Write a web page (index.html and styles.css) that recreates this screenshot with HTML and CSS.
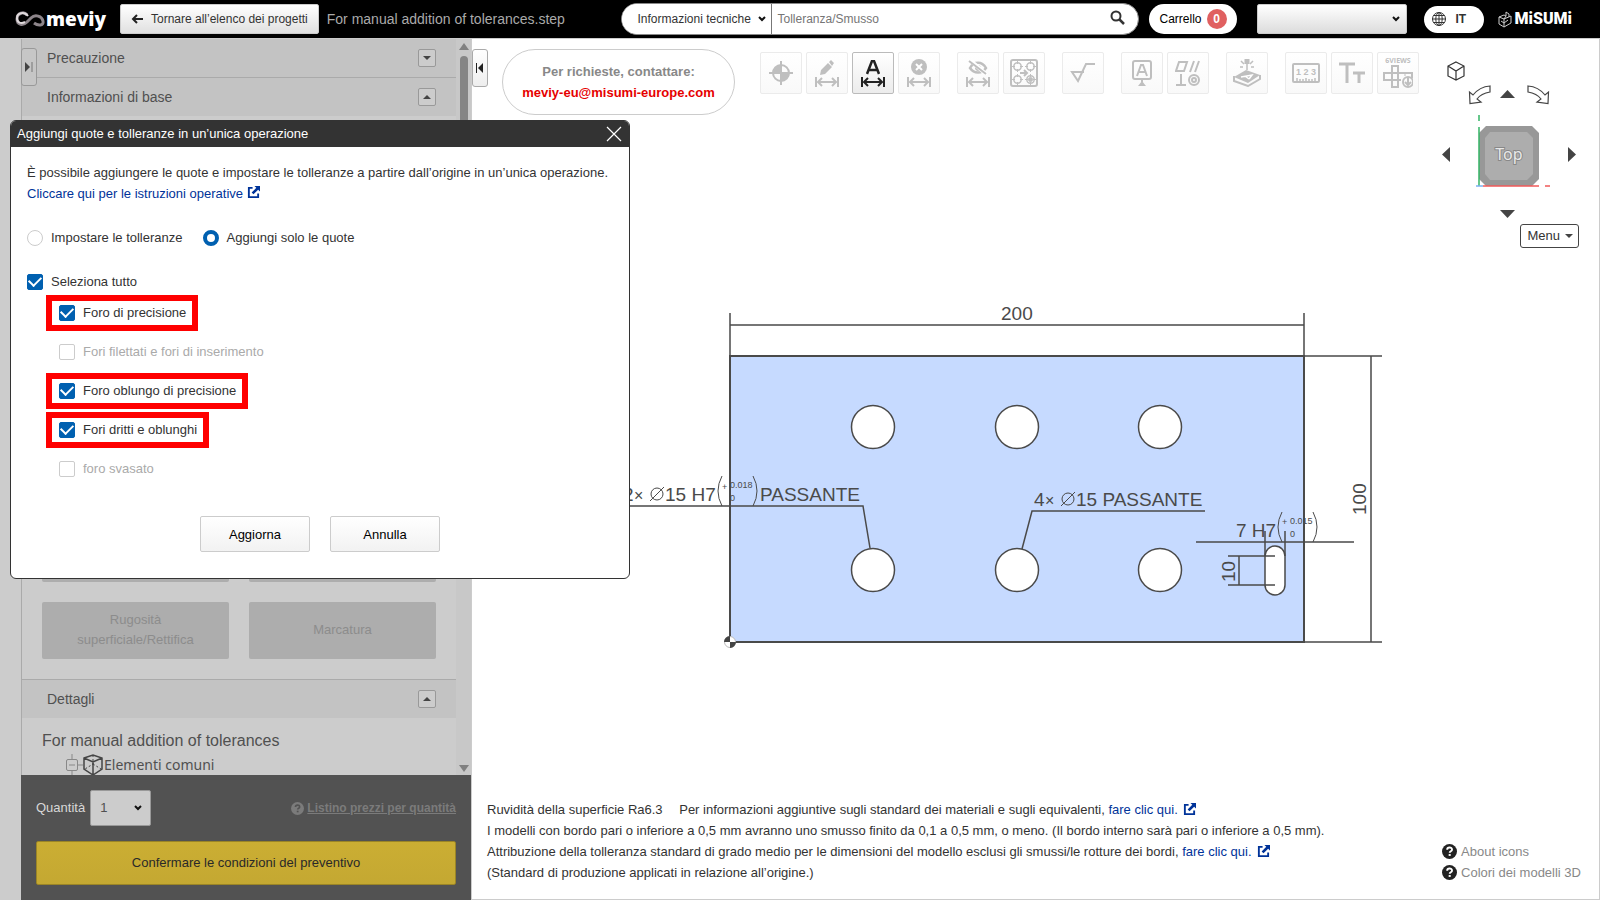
FILE: index.html
```html
<!DOCTYPE html>
<html lang="it">
<head>
    <meta charset="UTF-8">
    <meta name="viewport" content="width=device-width, initial-scale=1.0">
    <title>meviy - For manual addition of tolerances.step</title>
    <link rel="stylesheet" href="styles.css">
</head>
<body>

    <!-- Shared icons -->
    <svg class="defs" aria-hidden="true">
        <symbol id="i-width" viewBox="0 0 24 10">
            <path d="M1 0v10M23 0v10M3 5h18M7 1L3 5l4 4M17 1l4 4-4 4" fill="none" stroke="currentColor" stroke-width="2"/>
        </symbol>
        <symbol id="i-external" viewBox="0 0 14 14">
            <path d="M6 2H2v10h10V8" fill="none" stroke="currentColor" stroke-width="2"/>
            <path d="M8 0h6v6l-2-2-5 5-2-2 5-5z" fill="currentColor"/>
        </symbol>
        <symbol id="i-help" viewBox="0 0 16 16">
            <circle cx="8" cy="8" r="8" fill="currentColor"/>
            <path d="M5.500 6.200c0-3.200 5.200-3.200 5.200-.2 0 1.700-2.500 1.600-2.500 3.300" fill="none" stroke="var(--mark)" stroke-width="2"/>
            <path d="M7.100 10.700h2.200v2H7.100z" fill="var(--mark)"/>
        </symbol>
        <symbol id="i-turn" viewBox="0 0 24 20">
            <path d="M22 1v6C16 8 12 10 9 14l4 3-11 1.500L1.500 7l3.500 3C9 5 15 1.500 22 1z" fill="none" stroke="#444" stroke-width="1.200"/>
        </symbol>
    </svg>

    <header class="topbar">
        <a class="brand" href="#">
            <svg width="30" height="18" viewBox="0 0 30 18" fill="none">
                <path d="M12 5C9 1 2 3 2 9s6 7 10 3l4-4c4-4 11-2 12 3s-5 5-9 2" stroke="#8d858a" stroke-width="3"/>
                <path d="M13 6C9 1 2 3 2 8s4 6 8 4" stroke="#e0dadd" stroke-width="2"/>
            </svg>
            <span>meviy</span>
        </a>
        <button class="back-btn" type="button">
            <svg width="12" height="10" viewBox="0 0 12 10"><path d="M12 5H2M6 1L2 5l4 4" fill="none" stroke="#222" stroke-width="2"/></svg>
            Tornare all’elenco dei progetti
        </button>
        <span class="file-name">For manual addition of tolerances.step</span>
        <form class="search">
            <select class="search-type" aria-label="Categoria"><option>Informazioni tecniche</option></select>
            <input class="search-input" type="text" placeholder="Tolleranza/Smusso" aria-label="Cerca">
            <button class="search-btn" type="button" aria-label="Cerca">
                <svg width="15" height="15" viewBox="0 0 15 15"><circle cx="6" cy="6" r="4.500" fill="none" stroke="#333" stroke-width="2"/><path d="M9 9l5 5" stroke="#333" stroke-width="2.500"/></svg>
            </button>
        </form>
        <button class="cart" type="button">Carrello <span class="badge">0</span></button>
        <select class="account" aria-label="Account"><option></option></select>
        <button class="lang" type="button">
            <svg width="14" height="14" viewBox="0 0 14 14" fill="none" stroke="#333"><circle cx="7" cy="7" r="6.500"/><ellipse cx="7" cy="7" rx="3.200" ry="6.500"/><path d="M7 0v14M0 7h14M1.500 3.500h11M1.500 10.500h11"/></svg>
            IT
        </button>
        <a class="misumi" href="#">
            <svg width="14" height="17" viewBox="0 0 14 17" fill="none" stroke="#ccc"><path d="M1 6l5 2v8l-5-3zM6 8l7-3v7l-7 4M1 6l5-2 2 1V1l3 2v3M6 8l2-3M3 10l3 2 4-3"/></svg>
            <span>MiSUMi</span>
        </a>
    </header>

    <div class="workspace">

        <aside class="sidebar">
            <button class="tab tab-left" type="button" aria-label="Apri pannello">
                <svg width="8" height="10" viewBox="0 0 8 10"><path d="M0 0l5 5-5 5z" fill="#444"/><path d="M7 0v10" stroke="#777"/></svg>
            </button>
            <div class="panel">
                <div class="panel-content">
                    <div class="section-head">
                        Precauzione
                        <button class="toggle" type="button" aria-label="Espandi"><span class="tri-down"></span></button>
                    </div>
                    <div class="section-head">
                        Informazioni di base
                        <button class="toggle" type="button" aria-label="Comprimi"><span class="tri-up"></span></button>
                    </div>
                    <div class="section-body">
                        <div class="feature-grid">
                            <div class="feature"></div>
                            <div class="feature"></div>
                            <button class="feature" type="button" disabled>Rugosità<br>superficiale/Rettifica</button>
                            <button class="feature" type="button" disabled>Marcatura</button>
                        </div>
                    </div>
                    <div class="section-head">
                        Dettagli
                        <button class="toggle" type="button" aria-label="Comprimi"><span class="tri-up"></span></button>
                    </div>
                    <div class="tree">
                        <div class="tree-title">For manual addition of tolerances</div>
                        <div class="tree-item">
                            <svg width="38" height="22" viewBox="0 0 38 22" fill="none">
                                <path d="M6 0v5M6 17v5M12 11h5" stroke="#888"/>
                                <rect x=".5" y="5.500" width="11" height="11" rx="1.500" stroke="#888"/>
                                <path d="M3 11h6" stroke="#888"/>
                                <path d="M18 4l9-3 9 3v11l-9 6-9-6zM18 4l9 4 9-4M27 8v12" stroke="#444" stroke-width="1.500"/>
                                <path d="M27 1v9l-8 5M27 10l8 5" stroke="#444" stroke-dasharray="2 2"/>
                            </svg>
                            <span>Elementi comuni</span>
                        </div>
                    </div>
                </div>
                <div class="scrollbar">
                    <span class="scroll-up"></span>
                    <span class="scroll-thumb"></span>
                    <span class="scroll-down"></span>
                </div>
            </div>
            <div class="order">
                <div class="order-row">
                    <label for="qty">Quantità</label>
                    <select id="qty" class="qty"><option>1</option></select>
                    <a class="price-list" href="#">
                        <svg width="13" height="13"><use href="#i-help"/></svg>
                        <span>Listino prezzi per quantità</span>
                    </a>
                </div>
                <button class="confirm-btn" type="button">Confermare le condizioni del preventivo</button>
            </div>
        </aside>

        <main class="viewer">
            <button class="tab tab-right" type="button" aria-label="Chiudi pannello">
                <svg width="8" height="10" viewBox="0 0 8 10"><path d="M7 0v10L2 5z" fill="#222"/><path d="M.5 0v10" stroke="#222"/></svg>
            </button>

            <div class="viewer-top">
                <div class="contact">
                    <span>Per richieste, contattare:</span>
                    <a href="mailto:meviy-eu@misumi-europe.com">meviy-eu@misumi-europe.com</a>
                </div>

                <div class="toolbar">
                    <div class="tool-group">
                        <button class="tool" type="button" aria-label="Origine">
                            <svg width="24" height="24" viewBox="0 0 24 24"><circle cx="12" cy="12" r="8" fill="none" stroke="currentColor" stroke-width="2"/><path d="M12 12V4a8 8 0 0 0-8 8zM12 12v8a8 8 0 0 0 8-8z" fill="currentColor"/><path d="M12 0v24M0 12h24" stroke="currentColor" stroke-width="2"/></svg>
                        </button>
                        <button class="tool" type="button" aria-label="Modifica quota">
                            <svg width="14" height="15" viewBox="0 0 14 15"><path d="M0 15l1-5 7-7 4 4-7 7zM9 2l2-2 3 3-2 3z" fill="currentColor"/></svg>
                            <svg width="24" height="10"><use href="#i-width"/></svg>
                        </button>
                        <button class="tool active" type="button" aria-label="Quote automatiche">
                            <svg width="14" height="15" viewBox="0 0 14 15"><path d="M1 14L6 1h2l5 13M3 10h8" fill="none" stroke="currentColor" stroke-width="2.500"/></svg>
                            <svg width="24" height="10"><use href="#i-width"/></svg>
                        </button>
                        <button class="tool" type="button" aria-label="Elimina quote">
                            <svg width="16" height="16" viewBox="0 0 16 16"><circle cx="8" cy="8" r="8" fill="currentColor"/><path d="M5 5l6 6M11 5l-6 6" stroke="#fff" stroke-width="2"/></svg>
                            <svg width="24" height="10"><use href="#i-width"/></svg>
                        </button>
                    </div>
                    <div class="tool-group">
                        <button class="tool" type="button" aria-label="Nascondi quote">
                            <svg width="20" height="15" viewBox="0 0 20 15" fill="none" stroke="currentColor"><path d="M2 8c4-7 12-7 16 0-4 6-12 6-16 0z" stroke-width="2.500"/><circle cx="10" cy="8" r="2.500" fill="currentColor"/><path d="M2 0l17 15" stroke="#fff" stroke-width="4"/><path d="M1 1l17 13" stroke-width="2"/></svg>
                            <svg width="24" height="10"><use href="#i-width"/></svg>
                        </button>
                        <button class="tool" type="button" aria-label="Raggruppa fori">
                            <svg width="28" height="28" viewBox="0 0 28 28" fill="none" stroke="currentColor"><rect x="1" y="1" width="26" height="26" rx="2" stroke-width="2"/><g stroke-width="1.500"><circle cx="7.500" cy="7.500" r="3.700"/><circle cx="20.500" cy="7.500" r="3.700"/><circle cx="7.500" cy="20.500" r="3.700"/><circle cx="20.500" cy="20.500" r="3.700"/></g><circle cx="20.500" cy="20.500" r="2" fill="currentColor"/><path d="M7.500 2v3M7.500 10v3M2 7.500h3M10 7.500h3M20.500 2v3M20.500 10v3M15 7.500h3M23 7.500h3M7.500 15v3M7.500 23v3M2 20.500h3M10 20.500h3M20.500 15v3M20.500 23v3M15 20.500h3M23 20.500h3"/><path d="M10 14h7M14 11l3 3-3 3" stroke-width="2"/></svg>
                        </button>
                    </div>
                    <div class="tool-group">
                        <button class="tool" type="button" aria-label="Rugosità">
                            <svg width="26" height="20" viewBox="0 0 26 20"><path d="M14 9H2l6 9 8-17h9" fill="none" stroke="currentColor" stroke-width="2"/></svg>
                        </button>
                    </div>
                    <div class="tool-group">
                        <button class="tool" type="button" aria-label="Riferimento">
                            <svg width="20" height="26" viewBox="0 0 20 26" fill="none" stroke="currentColor" stroke-width="2"><rect x="1" y="1" width="18" height="18" rx="2"/><path d="M5 16l4-11h2l4 11M6.500 12h7M10 19v3"/><path d="M6 26l4-5 4 5z" fill="currentColor" stroke="none"/></svg>
                        </button>
                        <button class="tool" type="button" aria-label="Tolleranze geometriche">
                            <svg width="26" height="26" viewBox="0 0 26 26" fill="none" stroke="currentColor" stroke-width="2"><path d="M4 2h8l-3 9H1zM19 1l-4 11M24 1l-4 11M1 25h10M6 14v11"/><circle cx="19" cy="20" r="5"/><circle cx="19" cy="20" r="2"/></svg>
                        </button>
                    </div>
                    <div class="tool-group">
                        <button class="tool" type="button" aria-label="Marcatura">
                            <svg width="28" height="28" viewBox="0 0 28 28"><g fill="none" stroke="currentColor"><path d="M14 0v5" stroke-width="5"/><path d="M14 5v6M8 2l3 3M20 2l-3 3M7 8h3M18 8h3" stroke-width="1.500"/></g><path d="M1 18l12-7 14 5-12 8z" fill="currentColor"/><path d="M1 17v5l14 5 12-7v-4" fill="none" stroke="currentColor" stroke-width="2"/><path d="M8 18l11-2-3 4M12 17l4 3" fill="none" stroke="#fff" stroke-width="1.500"/></svg>
                        </button>
                    </div>
                    <div class="tool-group">
                        <button class="tool" type="button" aria-label="Misura">
                            <svg width="28" height="20" viewBox="0 0 28 20"><rect x="1" y="1" width="26" height="18" rx="1" fill="none" stroke="currentColor" stroke-width="2"/><path d="M5 19v-4M8 19v-3M11 19v-3M14 19v-4M17 19v-3M20 19v-3M23 19v-4" stroke="currentColor" stroke-width="1.500"/><text class="ruler-text" x="14" y="12" text-anchor="middle">1 2 3</text></svg>
                        </button>
                        <button class="tool" type="button" aria-label="Testo">
                            <svg width="26" height="22" viewBox="0 0 26 22"><path d="M0 2h16M8 2v19M14 11h12M20 11v10" fill="none" stroke="currentColor" stroke-width="3"/></svg>
                        </button>
                        <button class="tool views" type="button">
                            <span>6VIEWS</span>
                            <svg width="30" height="24" viewBox="0 0 30 24" fill="none" stroke="currentColor" stroke-width="2"><path d="M9 8V1h6v7h14v5M9 8H1v7h8v7h6v-7h3M9 8v7M15 8v7M9 8h6M9 15h6"/><path d="M22 8v3" stroke-width="1"/><circle cx="25" cy="17" r="5"/><path d="M25 13v7M22 17l3 3 3-3"/></svg>
                        </button>
                    </div>
                </div>
            </div>

            <div class="stage">
                <svg class="drawing" width="830" height="426" viewBox="620 240 830 426">
                    <rect class="plate" x="730" y="357" width="574" height="286"/>
                    <g class="holes">
                        <circle cx="873" cy="428" r="21.500"/>
                        <circle cx="1017" cy="428" r="21.500"/>
                        <circle cx="1160" cy="428" r="21.500"/>
                        <circle cx="873" cy="571" r="21.500"/>
                        <circle cx="1017" cy="571" r="21.500"/>
                        <circle cx="1160" cy="571" r="21.500"/>
                        <rect x="1265" y="547" width="20" height="49" rx="10"/>
                    </g>
                    <path class="lines" d="M730 314v44M1304 314v44M730 326h574M1304 357h78M1304 643h78M1371 357v286
                        M622 507h241l7 42M1022 550l10-38h173M1196 543h158M1265 532v25M1285 532v25M1228 557h47M1228 586h47M1239 557v29"/>
                    <!-- origin marker -->
                    <circle cx="730" cy="643" r="5.500" fill="#fff" stroke="#bbb"/>
                    <path d="M730 643v-6a6 6 0 0 0-6 6zM730 643v6a6 6 0 0 0 6-6z" fill="#444"/>
                    <g class="dim">
                        <text x="1001" y="321">200</text>
                        <text transform="translate(1366 516) rotate(-90)">100</text>
                        <text transform="translate(1235 583) rotate(-90)">10</text>
                        <text x="623" y="502">2</text>
                        <text class="times" x="634" y="502">×</text>
                        <text x="665" y="502">15 H7</text>
                        <text x="760" y="502">PASSANTE</text>
                        <text x="1034" y="507">4</text>
                        <text class="times" x="1045" y="507">×</text>
                        <text x="1076" y="507">15 PASSANTE</text>
                        <text x="1236" y="538">7 H7</text>
                    </g>
                    <g class="tol">
                        <text x="722" y="491">+</text>
                        <text x="730" y="489">0.018</text>
                        <text x="730" y="502">0</text>
                        <text x="1282" y="526">+</text>
                        <text x="1290" y="525">0.015</text>
                        <text x="1290" y="538">0</text>
                    </g>
                    <g class="marks">
                        <circle cx="657" cy="495" r="6"/><path d="M650 502l14-14"/>
                        <circle cx="1068" cy="500" r="6"/><path d="M1061 507l14-14"/>
                        <path d="M722 477q-8 15 0 30M753 477q8 15 0 30M1282 513q-8 15 0 30M1313 513q8 15 0 30"/>
                    </g>
                </svg>
            </div>

            <div class="notes">
                <div class="notes-text">
                    <p>Ruvidità della superficie Ra6.3 &emsp;Per informazioni aggiuntive sugli standard dei materiali e sugli equivalenti, <a href="#">fare clic qui. <svg width="13" height="13"><use href="#i-external"/></svg></a></p>
                    <p>I modelli con bordo pari o inferiore a 0,5 mm avranno uno smusso finito da 0,1 a 0,5 mm, o meno. (Il bordo interno sarà pari o inferiore a 0,5 mm).</p>
                    <p>Attribuzione della tolleranza standard di grado medio per le dimensioni del modello esclusi gli smussi/le rotture dei bordi, <a href="#">fare clic qui. <svg width="13" height="13"><use href="#i-external"/></svg></a></p>
                    <p>(Standard di produzione applicati in relazione all’origine.)</p>
                </div>
                <div class="help-links">
                    <a href="#"><svg width="15" height="15"><use href="#i-help"/></svg>About icons</a>
                    <a href="#"><svg width="15" height="15"><use href="#i-help"/></svg>Colori dei modelli 3D</a>
                </div>
            </div>

            <!-- View cube, floats over the model -->
            <div class="view-nav">
                <svg width="160" height="164" viewBox="1430 56 160 164">
                    <path d="M1456 62l8 4v10l-8 4-8-4V66zM1448 66l8 5 8-5M1456 71v9" fill="none" stroke="#333" stroke-width="1.200"/>
                    <use href="#i-turn" x="1468" y="85" width="24" height="20"/>
                    <use href="#i-turn" transform="translate(1550 85) scale(-1 1)" width="24" height="20"/>
                    <path d="M1500 98l7.500-8 7.500 8zM1500 210h15l-7.500 8zM1442 154.500l8-7.500v15zM1576 154.500l-8-7.500v15z" fill="#444"/>
                    <path d="M1486 126h46l7 7v46l-7 7h-46l-7-7v-46z" fill="#989898"/>
                    <path d="M1490 132h37l6 6v36l-6 6h-37l-5-6v-36z" fill="#adadad"/>
                    <path d="M1479 115v6M1479 127v59" stroke="#35b566" stroke-width="1.500"/>
                    <path d="M1483 186h56M1545 186h5" stroke="#ef5a5a" stroke-width="1.500"/>
                    <path d="M1476 186h7" stroke="#7ab0f0" stroke-width="1.500"/>
                    <text class="cube-text" x="1509" y="160" text-anchor="middle">Top</text>
                </svg>
                <button class="menu-btn" type="button">Menu <span class="tri-down"></span></button>
            </div>
        </main>
    </div>

    <div class="modal" role="dialog" aria-labelledby="modal-title">
        <div class="modal-head">
            <span id="modal-title">Aggiungi quote e tolleranze in un’unica operazione</span>
            <button class="close" type="button" aria-label="Chiudi">
                <svg width="16" height="16" viewBox="0 0 16 16"><path d="M1 1l14 14M15 1L1 15" stroke="#fff" stroke-width="1.200"/></svg>
            </button>
        </div>
        <div class="modal-body">
            <p>È possibile aggiungere le quote e impostare le tolleranze a partire dall’origine in un’unica operazione.</p>
            <p><a href="#">Cliccare qui per le istruzioni operative <svg width="13" height="13"><use href="#i-external"/></svg></a></p>

            <div class="radio-row">
                <label class="option"><input type="radio" name="mode">Impostare le tolleranze</label>
                <label class="option"><input type="radio" name="mode" checked>Aggiungi solo le quote</label>
            </div>

            <label class="option"><input type="checkbox" checked>Seleziona tutto</label>
            <div class="check-list">
                <label class="option marked"><input type="checkbox" checked>Foro di precisione</label>
                <label class="option disabled"><input type="checkbox" disabled>Fori filettati e fori di inserimento</label>
                <label class="option marked"><input type="checkbox" checked>Foro oblungo di precisione</label>
                <label class="option marked"><input type="checkbox" checked>Fori dritti e oblunghi</label>
                <label class="option disabled"><input type="checkbox" disabled>foro svasato</label>
            </div>

            <div class="modal-actions">
                <button class="btn" type="button">Aggiorna</button>
                <button class="btn" type="button">Annulla</button>
            </div>
        </div>
    </div>

</body>
</html>
```

FILE: styles.css
```css
:root {
    --text: #333;
    --link: #003399;
    --blue: #0060b0;
    --red: #ff0000;
    --dim: #4a4a4a;
    --mark: #fff;
    --chevron: url("data:image/svg+xml,%3Csvg xmlns='http://www.w3.org/2000/svg' width='8' height='6'%3E%3Cpath d='M1 1l3 3 3-3' fill='none' stroke='%23111' stroke-width='2'/%3E%3C/svg%3E");
}

* { box-sizing: border-box; }

body {
    margin: 0;
    height: 100vh;
    display: flex;
    flex-direction: column;
    font-family: "Liberation Sans", Arial, sans-serif;
    font-size: 13px;
    line-height: 20px;
    color: var(--text);
    background: #fff;
    overflow: hidden;
}

button, select, input { font: inherit; color: inherit; }
button { cursor: pointer; padding: 0; }
select { appearance: none; }
a { color: var(--link); text-decoration: none; }
p { margin: 0; }
svg { flex: none; }
.defs { position: absolute; width: 0; height: 0; }

/* --- Top bar --- */
.topbar {
    display: flex;
    align-items: center;
    height: 38px;
    flex: none;
    padding: 0 28px 0 15px;
    background: #000;
    font-size: 12px;
}
.brand { display: flex; align-items: center; gap: 1px; width: 105px; color: #fff; }
.brand span { font: 800 19px/24px "Open Sans", sans-serif; }
.back-btn {
    display: flex;
    align-items: center;
    gap: 8px;
    height: 30px;
    padding: 0 10px;
    border: 1px solid #ccc;
    border-radius: 2px;
    background: linear-gradient(#fff, #e0e0e0);
    white-space: nowrap;
}
.file-name { margin-left: 8px; flex: 1; font-size: 14px; color: #aaa; white-space: nowrap; }
.search {
    display: flex;
    align-items: center;
    width: 518px;
    height: 32px;
    border: 1px solid #888;
    border-radius: 16px;
    background: #fff;
    overflow: hidden;
}
.search-type {
    width: 150px;
    height: 30px;
    padding: 0 0 0 15px;
    border: 0;
    border-right: 1px solid #777;
    background: #fff var(--chevron) no-repeat right 5px center;
}
.search-input { flex: 1; min-width: 0; height: 30px; padding: 0 5px; border: 0; outline: none; }
.search-btn { display: flex; margin: 0 13px 3px 0; border: 0; background: none; }
.cart {
    display: flex;
    align-items: center;
    gap: 5px;
    height: 30px;
    margin-left: 10px;
    padding: 0 10px;
    border: 0;
    border-radius: 15px;
    background: #fff;
    color: #000;
}
.badge { width: 20px; height: 20px; border-radius: 50%; background: #e06060; color: #fff; font-weight: 600; }
.account {
    width: 150px;
    height: 30px;
    margin-left: 20px;
    padding: 0 3px;
    border: 1px solid #ccc;
    border-radius: 2px;
    background: var(--chevron) no-repeat right 6px center, linear-gradient(#fff, #dcdcdc);
}
.lang {
    display: flex;
    align-items: center;
    gap: 10px;
    width: 60px;
    height: 27px;
    margin-left: 17px;
    padding-left: 8px;
    border: 0;
    border-radius: 14px;
    background: #fff;
    font-weight: 700;
}
.misumi { display: flex; align-items: center; gap: 3px; margin-left: 14px; color: #fff; }
.misumi span { font: 900 16px/20px Roboto, sans-serif; }

/* --- Workspace --- */
.workspace { display: flex; flex: 1; min-height: 0; border-top: 1px solid #ccc; }

.sidebar {
    position: relative;
    display: flex;
    flex-direction: column;
    width: 472px;
    flex: none;
    padding-left: 21px;
    border-right: 1px solid #ccc;
    background: #ccc;
}
.panel { display: flex; flex: 1; min-height: 0; border-left: 1px solid #aaa; }
.panel-content { display: flex; flex-direction: column; flex: 1; overflow: hidden; }
.section-head {
    display: flex;
    align-items: center;
    justify-content: space-between;
    height: 39px;
    flex: none;
    padding: 0 20px 0 25px;
    border-top: 1px solid #aaa;
    background: #c3c3c3;
    font-size: 14px;
    color: #505050;
}
.section-head:first-child { height: 38px; border-top: 0; }
.toggle {
    display: flex;
    align-items: center;
    justify-content: center;
    width: 18px;
    height: 18px;
    border: 1px solid #999;
    border-radius: 2px;
    background: #ccc;
}
.tri-up, .tri-down { border: 4px solid transparent; }
.tri-up { border-top: 0; border-bottom-color: #444; }
.tri-down { border-bottom: 0; border-top-color: #444; }

.section-body { display: flex; flex-direction: column; justify-content: flex-end; flex: 1; min-height: 0; padding: 20px; }
.feature-grid { display: grid; grid-template-columns: 1fr 1fr; grid-auto-rows: 57px; gap: 20px; }
.feature { padding: 0 0 2px; border: 0; border-radius: 2px; background: #adadad; color: #8c8c8c; }

.tree { height: 57px; flex: none; padding: 12px 20px 0; color: #505050; overflow: hidden; }
.tree-title { font-size: 16px; line-height: 22px; }
.tree-item { display: flex; align-items: center; height: 26px; padding-left: 24px; font: 14px/24px "Noto Sans", sans-serif; }

.scrollbar { display: flex; flex-direction: column; align-items: center; width: 15px; padding: 4px 0 3px; background: #c8c8c8; }
.scroll-up, .scroll-down { border: 5px solid transparent; }
.scroll-up { border-top: 0; border-bottom: 7px solid #808080; }
.scroll-down { margin-top: auto; border-bottom: 0; border-top: 7px solid #808080; }
.scroll-thumb { width: 8px; height: 50%; margin-top: 6px; border-radius: 4px; background: #858585; }

.order { padding: 15px; background: #525252; }
.order-row { display: flex; align-items: center; height: 36px; margin-bottom: 15px; color: #d8d8d8; }
.qty {
    width: 61px;
    height: 36px;
    margin-left: 5px;
    padding: 0 9px;
    border: 1px solid #999;
    border-radius: 2px;
    background: #ccc var(--chevron) no-repeat right 8px center;
    color: #505050;
}
.price-list { --mark: #525252; display: flex; align-items: center; gap: 3px; margin-left: auto; font-size: 12px; color: #7b7b7b; font-weight: 600; }
.price-list span { text-decoration: underline; }
.confirm-btn {
    display: block;
    width: 100%;
    height: 44px;
    border: 1px solid #9b8526;
    border-radius: 2px;
    background: linear-gradient(#cbae33, #c4a832);
    color: #292929;
}

/* Panel handles, sit over the panel edges */
.tab {
    position: absolute;
    top: 9px;
    display: flex;
    align-items: center;
    justify-content: center;
    width: 16px;
    height: 38px;
    border: 1px solid #aaa;
    border-radius: 3px;
}
.tab-left { left: 21px; border-color: #999; background: #c6c6c6; }
.tab-right { left: 0; top: 10px; background: linear-gradient(#fff, #eee); }

/* --- Viewer --- */
.viewer {
    position: relative;
    display: flex;
    flex-direction: column;
    flex: 1;
    min-width: 0;
    border-right: 1px solid #ccc;
    border-bottom: 1px solid #ccc;
}
.viewer-top { display: flex; align-items: flex-start; gap: 25px; padding: 10px 0 0 30px; }
.contact {
    display: flex;
    flex-direction: column;
    align-items: center;
    justify-content: center;
    width: 233px;
    height: 66px;
    border: 1px solid #ccc;
    border-radius: 33px;
    font-weight: 700;
    line-height: 21px;
    color: #888;
}
.contact a { color: #e60000; }
.toolbar { display: flex; gap: 17px; padding-top: 3px; }
.tool-group { display: flex; gap: 4px; }
.tool {
    display: flex;
    flex-direction: column;
    align-items: center;
    justify-content: center;
    gap: 2px;
    width: 42px;
    height: 42px;
    border: 1px solid #ebebeb;
    border-radius: 2px;
    background: linear-gradient(#fff, #f9f9f9);
    color: #bfbfbf;
}
.tool.active { border-color: #bbb; background: linear-gradient(#fff, #ececec); color: #222; }
.tool.views { gap: 0; font: 700 7px/8px "Open Sans", sans-serif; }
.ruler-text { font: 700 9px "Liberation Sans", sans-serif; fill: currentColor; }

.stage { display: flex; align-items: center; justify-content: center; flex: 1; min-height: 0; padding: 0 2px 10px 0; }
.drawing { display: block; overflow: visible; }
.plate { fill: #c6daff; stroke: var(--dim); stroke-width: 2; }
.holes { fill: #fff; stroke: var(--dim); stroke-width: 1.5; }
.lines, .marks { fill: none; stroke: var(--dim); stroke-width: 1.5; }
.marks { stroke-width: 1; }
.dim { font-size: 19px; fill: var(--dim); }
.times { font-size: 16px; }
.tol { font-size: 9px; fill: var(--dim); }

.notes { display: flex; justify-content: space-between; align-items: flex-end; padding: 0 18px 16px 15px; line-height: 21px; }
.notes a, .modal-body a { white-space: nowrap; }
.notes-text svg { margin-left: 2px; vertical-align: -2px; }
.help-links { --mark: #fff; display: flex; flex-direction: column; }
.help-links a { display: flex; align-items: center; gap: 4px; color: #888; }
.help-links svg { color: #222; }

.view-nav { position: absolute; top: 17px; right: 9px; display: flex; flex-direction: column; align-items: flex-end; }
.view-nav svg { display: block; margin-bottom: 4px; }
.cube-text { font: 16px "Noto Sans", sans-serif; fill: #e8e8e8; stroke: #888; stroke-width: 2; paint-order: stroke; }
.menu-btn {
    display: flex;
    align-items: center;
    gap: 5px;
    height: 24px;
    margin-right: 11px;
    padding: 0 5px 0 6px;
    border: 1px solid #444;
    border-radius: 3px;
    background: #fff;
}

/* --- Modal --- */
.modal {
    position: absolute;
    left: 10px;
    top: 120px;
    width: 620px;
    border: 1px solid #333;
    border-radius: 6px;
    background: #fff;
    overflow: hidden;
}
.modal-head {
    display: flex;
    align-items: center;
    justify-content: space-between;
    height: 26px;
    padding: 0 7px 0 6px;
    background: #333;
    color: #fff;
}
.close { display: flex; border: 0; background: none; }
.modal-body { padding: 15px 16px 26px; line-height: 21px; }
.modal-body a svg { vertical-align: -1px; }
.radio-row { display: flex; gap: 20px; margin: 24px 0; }
.option { display: flex; align-items: center; gap: 8px; width: max-content; line-height: 20px; }
.option.disabled { color: #aaa; }
.option input {
    appearance: none;
    width: 16px;
    height: 16px;
    margin: 0;
    border: 1px solid #ccc;
    border-radius: 2px;
    background: #fff;
}
.option input[type="radio"] { border-radius: 50%; }
.option input[type="radio"]:checked { border: 4px solid var(--blue); }
.option input[type="checkbox"]:checked {
    display: grid;
    place-items: center;
    border-color: var(--blue);
    background: var(--blue);
}
.option input[type="checkbox"]:checked::before {
    content: "";
    width: 10px;
    height: 6px;
    margin-bottom: 4px;
    border: solid #fff;
    border-width: 0 0 2px 2px;
    rotate: -45deg;
}
.check-list { display: flex; flex-direction: column; gap: 3px; margin: 3px 0 0 19px; }
.check-list .option { height: 36px; padding: 0 6px 0 7px; border: 6px solid transparent; }
.check-list .marked { border-color: var(--red); }
.modal-actions { display: flex; justify-content: center; gap: 20px; margin-top: 29px; }
.btn {
    width: 110px;
    height: 36px;
    border: 1px solid #ccc;
    border-radius: 2px;
    background: linear-gradient(#fff, #f2f2f2);
    color: #000;
}
```
